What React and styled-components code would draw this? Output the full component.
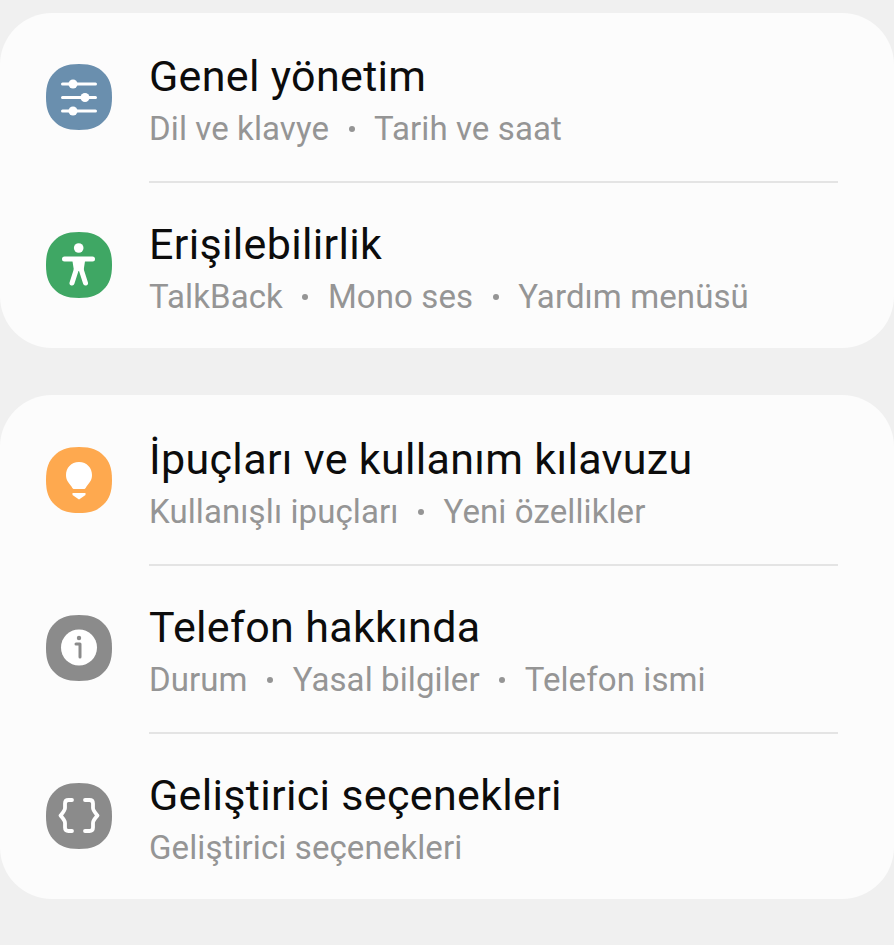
import React from "react";
import styled, { createGlobalStyle } from "styled-components";

const GlobalStyle = createGlobalStyle`
  html, body {
    margin: 0;
    padding: 0;
    background: #f0f0f0;
  }
  body {
    font-family: Roboto, "Noto Sans", sans-serif;
  }
`;

const Page = styled.div`
  width: 894px;
  height: 945px;
  padding-top: 13px;
  box-sizing: border-box;
  overflow: hidden;
  display: flex;
  flex-direction: column;
  gap: 47px;
`;

const Card = styled.section`
  background: #fcfcfc;
  border-radius: 52px;
  display: flex;
  flex-direction: column;
  padding-right: 56px;
  padding-top: ${(p) => p.$inset || 0}px;
`;

const Row = styled.div`
  height: 168px;
  display: flex;
  align-items: center;
  padding-left: 46px;
  gap: 37px;

  &:last-child {
    height: 167px;
  }

  & + & > div:last-child {
    box-shadow: inset 0 2px 0 #e4e4e4;
  }
`;

const Body = styled.div`
  flex: 1;
  height: 100%;
  box-sizing: border-box;
  display: flex;
  flex-direction: column;
  padding-top: 40px;
`;

const Title = styled.div`
  font-size: 43px;
  line-height: 46px;
  letter-spacing: 0.33px;
  color: #0c0c0c;
`;

const Summary = styled.div`
  display: flex;
  align-items: center;
  gap: 19.5px;
  margin-top: 11px;
  font-size: 33px;
  line-height: 38px;
  letter-spacing: 0.1px;
  color: #959595;
`;

const Dot = styled.span`
  width: 6px;
  height: 6px;
  border-radius: 50%;
  background: #959595;
`;

const IconSvg = styled.svg`
  width: 66px;
  height: 66px;
  flex: none;
`;

const SQUIRCLE = "M33 0C46 0 52 3 57.500 8.500C63 14 66 20 66 33C66 46 63 52 57.500 57.500C52 63 46 66 33 66C20 66 14 63 8.500 57.500C3 52 0 46 0 33C0 20 3 14 8.500 8.500C14 3 20 0 33 0Z";

function AppIcon({ color, children }) {
  return (
    <IconSvg viewBox="0 0 66 66">
      <path d={SQUIRCLE} fill={color} />
      {children}
    </IconSvg>
  );
}

const SlidersIcon = () => (
  <AppIcon color="#6a8fae">
    <g stroke="#fff" strokeWidth="3" strokeLinecap="round">
      <path d="M16.500 20H49.500M16.500 33.500H49.500M16.500 47H49.500" />
    </g>
    <g fill="#fff">
      <circle cx="27" cy="20" r="4.500" />
      <circle cx="39" cy="33.500" r="4.500" />
      <circle cx="27" cy="47" r="4.500" />
    </g>
  </AppIcon>
);

const BodyIcon = () => (
  <AppIcon color="#3fa764">
    <circle cx="32.700" cy="16" r="4.800" fill="#fff" />
    <path
      d="M18.500 27H46.500M30.500 37L26 51M35 37L39.500 51"
      stroke="#fff"
      strokeWidth="5"
      strokeLinecap="round"
      strokeLinejoin="round"
      fill="none"
    />
    <path d="M26 26H39.500L37.500 39H28Z" fill="#fff" />
  </AppIcon>
);

const BulbIcon = () => (
  <AppIcon color="#fea94f">
    <path
      d="M33 15C25 15 20 21 20 28C20 33.500 23 36 25.500 39.500C26.500 41.500 27 42 28.500 42H37.500C39 42 39.500 41.500 40.500 39.500C43 36 46 33.500 46 28C46 21 41 15 33 15Z"
      fill="#fff"
    />
    <path d="M26.500 46H39.500V48L33 52.500L26.500 48Z" fill="#fff" />
  </AppIcon>
);

const InfoIcon = () => (
  <AppIcon color="#8b8b8b">
    <circle cx="33" cy="32.500" r="18" fill="#fff" />
    <circle cx="33" cy="23" r="2.200" fill="#8b8b8b" />
    <path d="M30 29H34V42" stroke="#8b8b8b" strokeWidth="3" strokeLinecap="round" strokeLinejoin="round" fill="none" />
  </AppIcon>
);

const BracesIcon = () => (
  <AppIcon color="#8b8b8b">
    <path
      d="M26 17H22.500C20 17 19 18 19 20.500V25C19 27.500 17 29.500 14.500 32.500C17 35.500 19 37.500 19 40V44.500C19 47 20 48 22.500 48H26M39 17H43.500C46 17 47 18 47 20.500V25C47 27.500 49 29.500 51.500 32.500C49 35.500 47 37.500 47 40V44.500C47 47 46 48 43.500 48H39"
      stroke="#fff"
      strokeWidth="3.800"
      strokeLinecap="round"
      strokeLinejoin="round"
      fill="none"
    />
  </AppIcon>
);

function Item({ icon, title, parts }) {
  return (
    <Row>
      {icon}
      <Body>
        <Title>{title}</Title>
        <Summary>
          {parts.map((part, i) => (
            <React.Fragment key={part}>
              {i > 0 && <Dot />}
              <span>{part}</span>
            </React.Fragment>
          ))}
        </Summary>
      </Body>
    </Row>
  );
}

export default function App() {
  return (
    <Page>
      <GlobalStyle />
      <Card>
        <Item icon={<SlidersIcon />} title="Genel yönetim" parts={["Dil ve klavye", "Tarih ve saat"]} />
        <Item icon={<BodyIcon />} title="Erişilebilirlik" parts={["TalkBack", "Mono ses", "Yardım menüsü"]} />
      </Card>
      <Card $inset={1}>
        <Item icon={<BulbIcon />} title="İpuçları ve kullanım kılavuzu" parts={["Kullanışlı ipuçları", "Yeni özellikler"]} />
        <Item icon={<InfoIcon />} title="Telefon hakkında" parts={["Durum", "Yasal bilgiler", "Telefon ismi"]} />
        <Item icon={<BracesIcon />} title="Geliştirici seçenekleri" parts={["Geliştirici seçenekleri"]} />
      </Card>
    </Page>
  );
}
